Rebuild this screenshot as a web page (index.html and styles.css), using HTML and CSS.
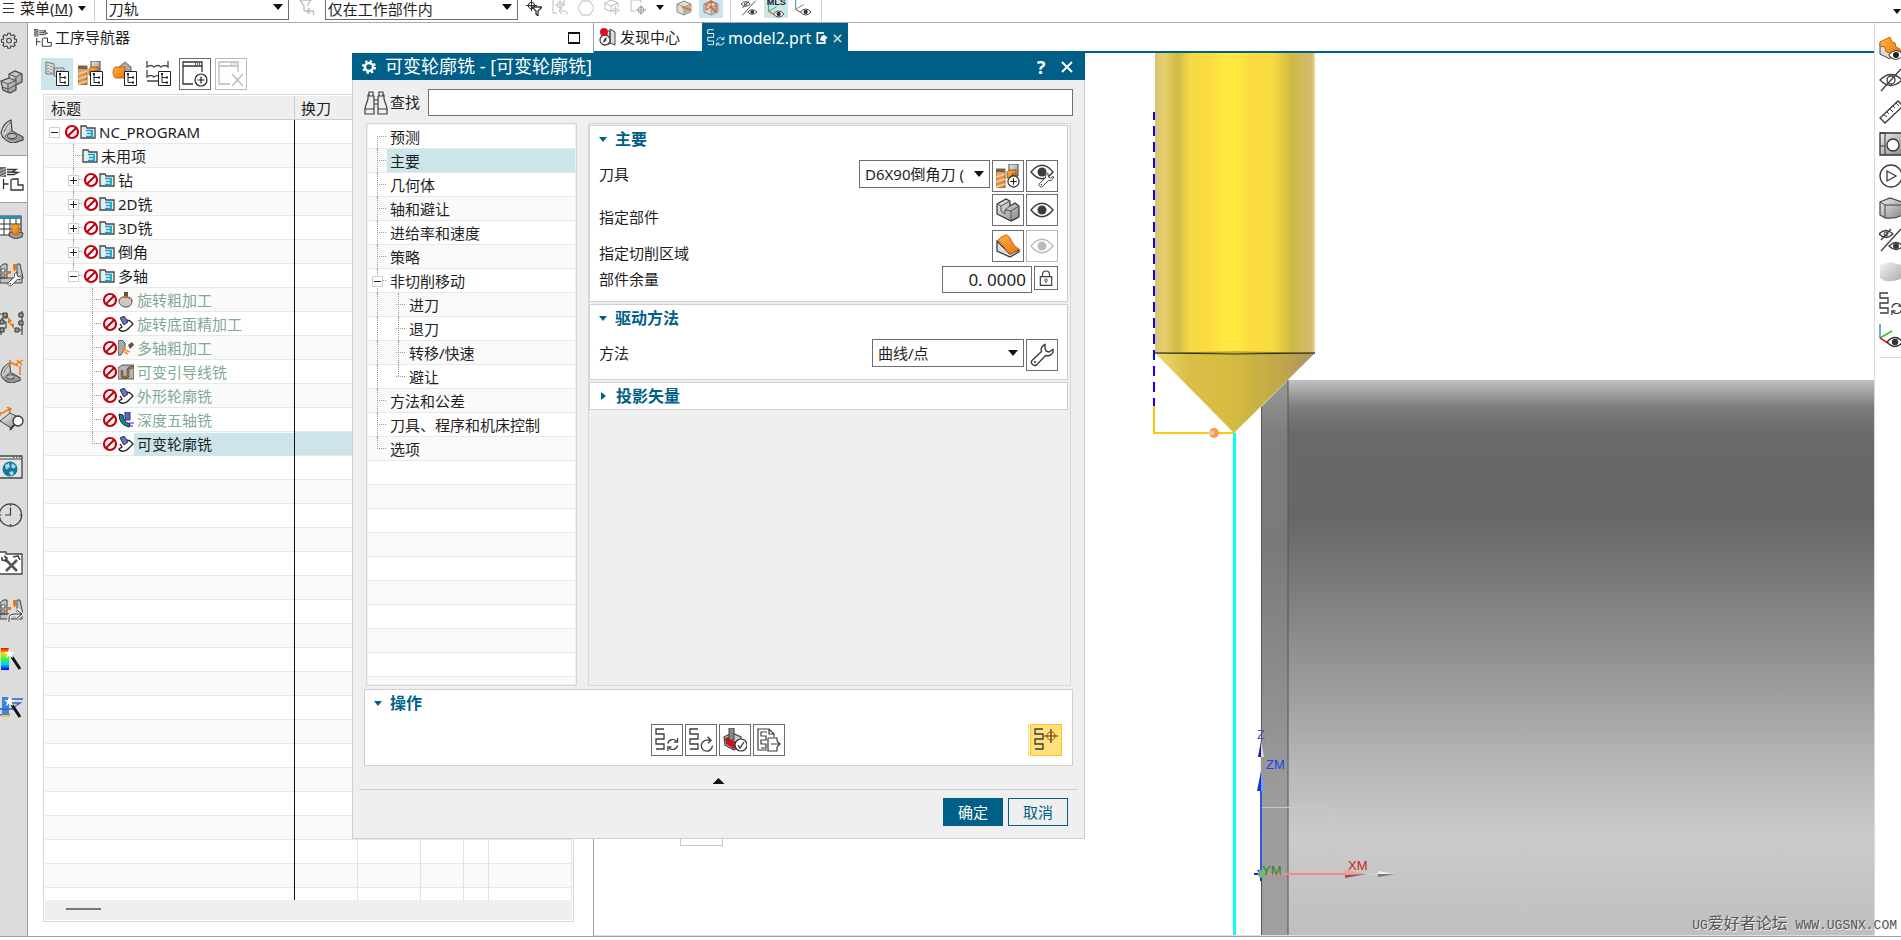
FILE: index.html
```html
<!DOCTYPE html>
<html lang="zh-CN">
<head>
<meta charset="utf-8">
<title>可变轮廓铣</title>
<link rel="stylesheet" href="styles.css">
</head>
<body>
<svg class="defs" aria-hidden="true">
  <defs>
    <linearGradient id="steel" x1="0" y1="0" x2="1" y2="1"><stop offset="0" stop-color="#eee"/><stop offset="1" stop-color="#888"/></linearGradient>
    <linearGradient id="orange" x1="0" y1="0" x2="1" y2="1"><stop offset="0" stop-color="#ffb347"/><stop offset="1" stop-color="#e8720c"/></linearGradient>
    <linearGradient id="rainbow" x1="0" y1="0" x2="0" y2="1"><stop offset="0" stop-color="#f00"/><stop offset=".25" stop-color="#fd0"/><stop offset=".5" stop-color="#2f3"/><stop offset=".75" stop-color="#0cf"/><stop offset="1" stop-color="#00f"/></linearGradient>
  </defs>
  <symbol id="gear" viewBox="0 0 24 24"><path d="M10.400 3h3.200l.5 2.400 1.800.8 2.100-1.400 2.200 2.200-1.400 2.100.8 1.800 2.400.5v3.200l-2.400.5-.8 1.800 1.400 2.100-2.200 2.200-2.100-1.400-1.800.8-.5 2.400h-3.200l-.5-2.400-1.800-.8L6 21.200 3.800 19l1.400-2.100-.8-1.800L2 14.600v-3.200l2.400-.5.8-1.800L3.800 7 6 4.800l2.100 1.400 1.800-.8z" fill="none" stroke="currentColor" stroke-width="1.500"/><circle cx="12" cy="12.800" r="3.200" fill="none" stroke="currentColor" stroke-width="1.500"/></symbol>
  <symbol id="gear-solid" viewBox="0 0 16 16"><circle cx="8" cy="8" r="4" fill="none" stroke="currentColor" stroke-width="2.400"/><circle cx="8" cy="8" r="6" fill="none" stroke="currentColor" stroke-width="2" stroke-dasharray="2.360 2.350"/></symbol>
  <symbol id="blocks" viewBox="0 0 24 24"><path d="M1 11l8-3V4l6-3 7 3v8l-6 3v5l-6 3-7-3z" fill="url(#steel)" stroke="#444" stroke-width="1.200"/><path d="M1 11l7 3 7-3V8M8 14v9M9 4l7 3 6-3M16 7v8M2 17l6 2 8-4M9 8l7 3" fill="none" stroke="#555"/></symbol>
  <symbol id="bracket" viewBox="0 0 24 24"><path d="M1 14C2 8 6 3 11 1l1 11 11 6v3l-9 3C8 24 2 19 1 14z" fill="url(#steel)" stroke="#444" stroke-width="1.200"/><path d="M4 13c2-5 4-8 7-10M5 17l7-5M5 17c3 4 9 5 12 2" fill="none" stroke="#666"/><ellipse cx="12" cy="17" rx="4.500" ry="2.500" fill="#bbb" stroke="#444"/></symbol>
  <symbol id="opnav" viewBox="0 0 24 24"><path d="M0 0h6v10H0z" fill="#666"/><path d="M0 4l6-3M0 7l6-3M0 10l6-3" stroke="#ccc"/><path d="M7 2.500h9l-4 2.500H7M12 5l6 .5-4 2H7M3.500 12v10M3.500 17h5M11 13v10h12v-5h-5v-6h-5z" fill="none" stroke="#333" stroke-width="1.300"/></symbol>
  <symbol id="sheet" viewBox="0 0 24 24"><path d="M-4 1h25v19H-4z" fill="#fff" stroke="#333" stroke-width="1.200"/><path d="M-4 1h25v3H-4z" fill="#2a8fb0"/><path d="M0 9h21M0 14h21M4 4v16M10 4v16M16 4v16" stroke="#333"/><path d="M9 18l5-2 9 2-1 4-7 2-6-3z" fill="#999" stroke="#444"/><path d="M12 10q4-2 7 0v8q-3 3-7 0z" fill="url(#orange)" stroke="#b60"/></symbol>
  <symbol id="machine" viewBox="0 0 24 24"><path d="M0 4l3-3h4v14H0zM17 1h3l3 14h-6zM0 15h22v5H0z" fill="#c4c4c4" stroke="#444"/><path d="M1 6h4v3H1zM1 11h4v2H1z" fill="#fff" stroke="#555"/><path d="M7 8h4v3H7zM13 1h3v5l-1 2h-1l-1-2z" fill="#e87811"/></symbol>
  <symbol id="wrench" viewBox="0 0 24 24"><path d="M15 1.500c-3 1-4.500 4-3.500 7L2 17.500c-2 2.500 1.500 6 4.500 4.500l9-9.500c3 1 6.500-.5 7.500-3.500V6.500L19 9l-3-1-1-3z" fill="#fff" stroke="#3c3c3c" stroke-width="1.400"/><circle cx="5" cy="19" r="1.100" fill="#333"/></symbol>
  <symbol id="nodes" viewBox="0 0 24 24"><path d="M0 3h7v4H2v4h4v6H0M22 0v24M22 4h-4M22 12h-4M22 19h-5M1 21v3" fill="none" stroke="#444" stroke-width="1.200"/><path d="M3 2h4v4H3zM0 9h4v4H0zM0 17h4v4H0zM19 2h4v4h-4zM19 10h4v4h-4zM15 17h4v4h-4z" fill="#999" stroke="#333"/><path d="M8 6l4 4-4 3zM9 12l5 1v5z" fill="#e87811"/></symbol>
  <symbol id="measure" viewBox="0 0 24 24"><path d="M0 14L10 6l12 6-11 9z" fill="url(#steel)" stroke="#444"/><path d="M0 7l10-5M7 0l4 2-2 4M0 5v4" fill="none" stroke="#e87811" stroke-width="1.400"/><circle cx="18" cy="14" r="5" fill="#fff" stroke="#333" stroke-width="1.300"/><path d="M14 18l-4 5" stroke="#333" stroke-width="2"/></symbol>
  <symbol id="globe" viewBox="0 0 24 24"><path d="M-2 1h24v22H-2z" fill="#e5e5e5" stroke="#444" stroke-width="1.300"/><path d="M-2 4h24M13 2.500h1M16 2.500h1M19 2.500h1" stroke="#444"/><circle cx="10" cy="14" r="7.500" fill="#15769c"/><path d="M5 10l4-2 1 4-4 3zM12 8l4 3-2 3-3-2zM9 17l4-1 1 3-3 2z" fill="#9fd8e8"/></symbol>
  <symbol id="clock" viewBox="0 0 24 24"><circle cx="10.500" cy="12" r="11.200" fill="none" stroke="#3c3c3c" stroke-width="1.200"/><path d="M10.500 4.500V12H5M10.500 1v2M10.500 21v2M0 12h1.500M19.500 12h2" fill="none" stroke="#3c3c3c" stroke-width="1.200"/></symbol>
  <symbol id="tools" viewBox="0 0 24 24"><path d="M-2 3V1h8v2h16v20H-2z" fill="#fff" stroke="#444" stroke-width="1.300"/><path d="M5 8l12 12M17 9L6 20" stroke="#555" stroke-width="2.600"/><path d="M2 6v3l4 1 1-3-3-2M13 6l5-1 2 4" fill="none" stroke="#444" stroke-width="1.600"/></symbol>
  <symbol id="wand" viewBox="0 0 24 24"><path d="M12 10l8 12" stroke="#111" stroke-width="3"/><path d="M9 1l1.500 4L15 5l-3.500 2L13 11 9.500 8.500 6 11l1-4-3-2h4z" fill="#fff"/></symbol>
  <symbol id="treebox" viewBox="0 0 13 15"><path d="M.5.5h12v14H.5z" fill="#fff" stroke="#222"/><path d="M4 3v8.500h5M4 6.500h5" fill="none" stroke="#222"/><path d="M3 2h2v2H3zM8 5.500h2v2H8zM8 10.500h2v2H8z" fill="#222"/></symbol>
  <symbol id="no" viewBox="0 0 16 16"><circle cx="8" cy="8" r="6" fill="#fff" stroke="#c5000f" stroke-width="2.200"/><path d="M12 4l-8 8" stroke="#c5000f" stroke-width="2.200"/></symbol>
  <symbol id="folder" viewBox="0 0 16 16"><path d="M1 14V2h5l1 2h8v10z" fill="#e9ecee" stroke="#444" stroke-width="1.300"/><path d="M6 6.500h6v6H6M7 9.500h5" fill="none" stroke="#0aa5cc" stroke-width="1.700"/></symbol>
  <symbol id="rough" viewBox="0 0 16 16"><path d="M1 9c0-3 3-4 7-4s6 1 6 4c0 4-3 6-6 6s-7-2-7-6z" fill="#c8c8c8" stroke="#444"/><path d="M6 0h4v6H6z" fill="#555"/><path d="M3 6q5-3 9 1" fill="none" stroke="#e87811" stroke-width="1.500"/></symbol>
  <symbol id="contour" viewBox="0 0 16 16"><path d="M7 5c3-2 6 0 8 3l-5 5c-3 3-8 3-9 0l3-2-2-3" fill="none" stroke="#222" stroke-width="1.300"/><path d="M2 2l4-2 4 6-4 3z" fill="#6a6fd0" stroke="#334"/></symbol>
  <symbol id="multi" viewBox="0 0 16 16"><path d="M0 1l4-1 3 3v5l-4 7H0z" fill="#aaa" stroke="#555"/><path d="M10 5l4-3 2 3-4 4z" fill="#555"/><path d="M4 8q1 4 6 6M6 7q1 4 6 5" fill="none" stroke="#f08a2a" stroke-width="1.500"/></symbol>
  <symbol id="guide" viewBox="0 0 16 16"><path d="M0 4l4-3h12v14H0z" fill="#b5b5b5" stroke="#555"/><path d="M4 6v6q3 3 6 0V6q1-3 6-3" fill="none" stroke="#444" stroke-width="2.500"/><path d="M4 6v6q3 3 6 0V6q1-3 6-3" fill="none" stroke="#e08030"/></symbol>
  <symbol id="five" viewBox="0 0 16 16"><path d="M1 2l4 1q0 7 7 9l-1 3Q1 13 1 2z" fill="#1d8a7c" stroke="#123"/><path d="M7 0h5v8H7z" fill="#5b62d6" stroke="#336"/><path d="M11 11h5M11 14h4" stroke="#22d"/></symbol>
  <symbol id="eye" viewBox="0 0 24 24"><path d="M1 12Q12-1.500 23 12 12 25.500 1 12z" fill="#fff" stroke="currentColor" stroke-width="1.400"/><circle cx="12" cy="12" r="4.500" fill="currentColor"/></symbol>
  <symbol id="eye-off" viewBox="0 0 24 24"><path d="M1 12Q12 1 23 12 12 23 1 12z" fill="none" stroke="#3c3c3c" stroke-width="1.300"/><circle cx="12" cy="12" r="4" fill="none" stroke="#3c3c3c" stroke-width="1.300"/><path d="M22 1L2 23" stroke="#3c3c3c" stroke-width="1.300"/></symbol>
  <symbol id="eyes" viewBox="0 0 24 24"><path d="M0 6q7-7 14 0-7 7-14 0zM2 23L22 1M12 1L2 12M10 18q7-7 14 0-7 7-14 0z" fill="none" stroke="#3c3c3c" stroke-width="1.300"/><circle cx="7" cy="6" r="2" fill="none" stroke="#3c3c3c"/><circle cx="17" cy="18" r="3" fill="#3c3c3c"/></symbol>
  <symbol id="axis-eye" viewBox="0 0 24 24"><path d="M1 0v14" stroke="#2a98b8" stroke-width="1.500"/><path d="M1 14l12-7" stroke="#3cb83c" stroke-width="1.500"/><path d="M1 14l8 5" stroke="#e22" stroke-width="1.500"/><path d="M8 18q8-9 16 0-8 9-16 0z" fill="#fff" stroke="#333" stroke-width="1.300"/><circle cx="16" cy="18" r="3.200" fill="#333"/></symbol>
  <symbol id="snake" viewBox="0 0 10 22"><path d="M9 1H1v5h8v5H1M9 11M1 11v0M1 11h8v5M9 11v5H1v5h8" fill="none"/><path d="M9 1H1v5h8v5H1v5h8v5H1" fill="none" stroke="currentColor" stroke-width="1.300"/></symbol>
  <symbol id="refresh" viewBox="0 0 14 14"><path d="M2 6a5.500 5.500 0 0 1 9.500-2.500M12.500 0v4.500H8.500M12.500 8A5.500 5.500 0 0 1 3 10.500M2 14V9.500h4" fill="none" stroke="currentColor" stroke-width="1.300"/></symbol>
  <symbol id="generate" viewBox="0 0 24 24"><use href="#snake" x="0" y="0" width="10" height="22"/><use href="#refresh" x="11" y="10" width="13" height="13"/></symbol>
  <symbol id="replay" viewBox="0 0 24 24"><use href="#snake" x="0" y="0" width="10" height="22"/><path d="M23.300 17.500A5.500 5.500 0 1 1 18 12.200h4M18.500 8.700L22 12.200l-3 3" fill="none" stroke="currentColor" stroke-width="1.300"/></symbol>
  <symbol id="verify" viewBox="0 0 24 24"><path d="M1 9l8-4 9 4v8l-7 5-9-5z" fill="#c9c9c9" stroke="#444" stroke-width="1.200"/><path d="M2 10l6-2v4l7 2-4 7-8-5z" fill="#c4161c"/><path d="M6 0h5v12H6z" fill="#888" stroke="#444"/><circle cx="18" cy="17" r="6" fill="#fff" stroke="#333" stroke-width="1.200"/><path d="M15 17l2 3 4-6" fill="none" stroke="#333" stroke-width="1.300"/></symbol>
  <symbol id="output" viewBox="0 0 24 24"><path d="M10 22H1V1h11l5 5v3M12 1v5h5M10 4H4v4h5v4H4v4h5v4H4M11 10v13h9v-4M11 10h9v3M14 16h9M20 13l3 3-3 3" fill="none" stroke="#3c3c3c" stroke-width="1.200"/></symbol>
  <symbol id="edit-path" viewBox="0 0 24 24"><use href="#snake" x="0" y="0" width="10" height="22"/><circle cx="17" cy="8" r="4" fill="none" stroke="#e87811" stroke-width="1.500"/><path d="M10 8h14M17 1v14" stroke="#3c3c3c" stroke-width="1.200"/></symbol>
  <symbol id="cutter" viewBox="0 0 24 24"><path d="M13 0h9v12h-9z" fill="url(#steel)" stroke="#444"/><path d="M0 5h9v19H0z" fill="url(#orange)" stroke="#a50"/><path d="M0 5h9v3H0z" fill="#666"/><path d="M0 13l9-3M0 18l9-3M0 23l9-3" stroke="#ccc" stroke-width="2"/><path d="M11 14V9q0-3 5-3h4v4h-4v5z" fill="url(#orange)" stroke="#a50"/></symbol>
  <symbol id="plus-badge" viewBox="0 0 14 14"><circle cx="7" cy="7" r="6" fill="#fff" stroke="#222" stroke-width="1.200"/><path d="M3.500 7h7M7 3.500v7" stroke="#222" stroke-width="1.200"/></symbol>
  <symbol id="part" viewBox="0 0 24 24"><path d="M1 6l9-5 4 2v5l5-3 4 3v11l-8 4L1 16z" fill="url(#steel)" stroke="#333" stroke-width="1.200"/><path d="M1 6l4 2 9-5M5 8v5l4 3v-4l5-4M9 12l6 1 8-5M15 13v10" fill="none" stroke="#555"/></symbol>
  <symbol id="area" viewBox="0 0 24 24"><path d="M1 7v10l13 6 9-5v-2L14 20z" fill="#ddd" stroke="#333" stroke-width="1.200"/><path d="M1 7q4-5 9-6c5 0 5 10 13 14l-8 5C8 17 7 7 1 7z" fill="url(#orange)" stroke="#d25c00"/></symbol>
  <symbol id="lock" viewBox="0 0 16 18"><path d="M1.500 7.500h13v10h-13zM4 7.500V5q0-4 4-4t4 4v2.500" fill="none" stroke="#3c3c3c" stroke-width="1.300"/><circle cx="8" cy="11.500" r="1.500" fill="none" stroke="#3c3c3c"/><path d="M8 13v2" stroke="#3c3c3c"/></symbol>
  <symbol id="binoculars" viewBox="0 0 24 24"><path d="M5 1h4v3l1 2v17H1v-6L4 8V4h1zM15 1h4v3h1v4l3 9v6h-9V6l1-2zM10 9h4M10 13h4M1 18h9M14 18h9M4 5h5M15 5h5" fill="none" stroke="#3c3c3c" stroke-width="1.200"/></symbol>
  <symbol id="cube" viewBox="0 0 16 16"><path d="M1 4l7-3 7 3v8l-7 3-7-3z" fill="#ddd" stroke="#888"/><path d="M8 7v8l7-3V4z" fill="#b5b5b5"/><path d="M1 4l7 3 7-3M8 7v8" fill="none" stroke="#999"/></symbol>
  <symbol id="crosshair" viewBox="0 0 12 12"><circle cx="6" cy="6" r="3.500" fill="none" stroke="currentColor"/><path d="M0 6h12M6 0v12" stroke="currentColor"/></symbol>
</svg>

<header class="toolbar">
  <button class="menu-btn"><span class="burger"></span>菜单(<u>M</u>)<span class="caret"></span></button>
  <i class="sep"></i>
  <label class="combo combo-path"><select aria-label="类型过滤器"><option>刀轨</option></select></label>
  <svg class="ic16 faded filter-ic" viewBox="0 0 16 16"><path d="M8 12l-3-2V6L1 0h11L8 6M9 11h4q3 0 1 4M11 8l-3 3 3 3" fill="none" stroke="currentColor" stroke-width="1.300"/></svg>
  <label class="combo combo-scope"><select aria-label="选择范围"><option>仅在工作部件内</option></select></label>
  <div class="tools">
    <svg class="ic16" viewBox="0 0 16 16"><use href="#crosshair" width="11" height="11"/><path d="M6 7h10l-4 4v5l-2-2v-3z" fill="#fff" stroke="#333" stroke-width="1.300"/></svg>
    <svg class="ic16 faded" viewBox="0 0 16 16"><path d="M1 0v13h4M12 0v5" fill="none" stroke="currentColor"/><use href="#crosshair" x="3" y="0" width="10" height="10"/><path d="M8 11h5q3 0 2 4M10 8l-3 3 3 3" fill="none" stroke="currentColor"/></svg>
    <svg class="ic16 faded" viewBox="0 0 16 16"><path d="M4 1h8l4 7-4 7H4L0 8z" fill="none" stroke="currentColor"/></svg>
    <svg class="ic16 faded" viewBox="0 0 16 16"><path d="M8 12l-7-3V3l6-3 7 3v4M1 3l6 3 7-3M7 6v5" fill="none" stroke="currentColor"/><use href="#crosshair" x="7" y="6" width="9" height="9"/></svg>
    <svg class="ic16 faded" viewBox="0 0 16 16"><path d="M1 0v11h4M2 0h9v3" fill="none" stroke="currentColor"/><use href="#crosshair" x="6" y="5" width="10" height="10" color="#888"/></svg>
    <span class="caret"></span>
    <svg class="ic16" viewBox="0 0 16 16"><use href="#cube"/><path d="M6 7l9 3" stroke="#e87811" stroke-width="2"/></svg>
    <span class="on"><svg class="ic16" viewBox="0 0 16 16"><use href="#cube"/><path d="M8 1v6l-5 3V5zM8 7l5 5V4L8 1" fill="none" stroke="#d8632a" stroke-width="1.200"/></svg></span>
    <i class="sep"></i>
    <svg class="ic16"><use href="#eyes"/></svg>
    <span class="on mls"><b>MLS</b><svg class="ic16"><use href="#axis-eye"/></svg></span>
    <svg class="ic16"><use href="#axis-eye"/></svg>
    <i class="sep"></i>
  </div>
  <span class="caret end"></span>
</header>

<div class="workspace">
  <nav class="sidebar" aria-label="资源条">
    <button class="first" aria-label="设置"><svg class="ic18"><use href="#gear"/></svg></button>
    <button class="tall" aria-label="装配"><svg><use href="#blocks"/></svg></button>
    <button class="tall" aria-label="部件"><svg><use href="#bracket"/></svg></button>
    <button class="active" aria-label="工序导航器"><svg><use href="#opnav"/></svg></button>
    <button aria-label="加工特征"><svg><use href="#sheet"/></svg></button>
    <button aria-label="机床导航"><svg viewBox="0 0 24 24"><use href="#machine"/><use href="#wrench" x="7" y="8" width="16" height="16"/></svg></button>
    <button aria-label="节点"><svg><use href="#nodes"/></svg></button>
    <button aria-label="标注"><svg viewBox="0 0 24 24"><use href="#bracket" y="3" width="21" height="21"/><path d="M10 3l8 4M10 1v5M16 5l7-4M17 1l5 5M20 7v9" stroke="#e87811" stroke-width="1.400"/></svg></button>
    <button aria-label="测量"><svg><use href="#measure"/></svg></button>
    <button aria-label="网页"><svg><use href="#globe"/></svg></button>
    <button aria-label="历史"><svg><use href="#clock"/></svg></button>
    <button aria-label="工具"><svg><use href="#tools"/></svg></button>
    <button aria-label="机床"><svg viewBox="0 0 24 24"><use href="#machine"/><path d="M9 23v-4q0-4 5-4h7M17 10l5 5-5 4" fill="none" stroke="#fff" stroke-width="3"/><path d="M9 23v-4q0-4 5-4h8M17 11l5 4-5 4" fill="none" stroke="#222"/></svg></button>
    <button aria-label="颜色"><svg viewBox="0 0 24 24"><path d="M1 1h8v22H1z" fill="url(#rainbow)"/><use href="#wand"/></svg></button>
    <button aria-label="向导"><svg viewBox="0 0 24 24"><path d="M2 2h7v17H2z" fill="#3a86d8"/><path d="M0 20h10M12 4h11M11 8h9l-6 4M0 14h13" stroke="#2f62c8" stroke-width="1.500" fill="none"/><path d="M1 21h9" stroke="#f4c430" stroke-width="2"/><use href="#wand"/></svg></button>
  </nav>

  <section class="navigator">
    <h1 class="panel-title"><svg class="ic18"><use href="#opnav"/></svg><span>工序导航器</span><button class="maximise" aria-label="最大化"></button></h1>
    <div class="nav-tools">
      <button class="on" aria-label="程序顺序视图"><svg viewBox="0 0 26 26"><path d="M2 1l8 2v10H2zM10 7h10v8H10z" fill="#d8d8d8" stroke="#777"/><path d="M4 4v8M7 5v8M13 9v5M17 9v3" stroke="#555" stroke-dasharray="1 2"/><use href="#treebox" x="12" y="10" width="13" height="15"/></svg></button>
      <button aria-label="机床视图"><svg viewBox="0 0 26 26"><use href="#cutter" width="24" height="24"/><use href="#treebox" x="12" y="10" width="13" height="15"/></svg></button>
      <button aria-label="几何视图"><svg viewBox="0 0 26 26"><path d="M7 6l6-5 6 5v12l-6-1z" fill="#aaa" stroke="#666"/><path d="M3 6h10v11H3q-4-5 0-11z" fill="url(#orange)" stroke="#c60"/><use href="#treebox" x="12" y="10" width="13" height="15"/></svg></button>
      <button aria-label="加工方法视图"><svg viewBox="0 0 26 26"><path d="M1 0v6q4-3 7 0 4-3 7 0 4-3 7 0V0M1 9v7q4-3 7 0 2-2 4-1M1 20h11" fill="none" stroke="#444" stroke-width="1.300"/><use href="#treebox" x="12" y="10" width="13" height="15"/></svg></button>
      <button class="boxed" aria-label="创建"><svg viewBox="0 0 26 26"><path d="M11 23H1V1h19v10M1 5h19M13 3h1M15 3h1M17 3h1" fill="none" stroke="#333" stroke-width="1.300"/><use href="#plus-badge" x="12" y="12" width="14" height="14"/></svg></button>
      <button class="boxed off" aria-label="删除" disabled><svg viewBox="0 0 26 26"><path d="M12 23H1V1h19v10M1 5h19M13 3h1M15 3h1M17 3h1M14 13l11 12M25 13L14 25" fill="none" stroke="#bbb" stroke-width="1.300"/></svg></button>
    </div>
    <div class="grid">
      <table class="ops">
        <colgroup><col class="c1"><col class="c2"><col class="c3"><col class="c4"><col class="c5"><col></colgroup>
        <thead><tr><th>标题</th><th>换刀</th><th></th><th></th><th></th><th></th></tr></thead>
        <tbody>
          <tr><td><div class="node l0"><i class="box minus"></i><svg><use href="#no"/></svg><svg><use href="#folder"/></svg><span>NC_PROGRAM</span></div></td><td colspan="5"></td></tr>
          <tr><td><div class="node l1 line"><svg><use href="#folder"/></svg><span>未用项</span></div></td><td colspan="5"></td></tr>
          <tr><td><div class="node l1 group line"><i class="box plus"></i><svg><use href="#no"/></svg><svg><use href="#folder"/></svg><span>钻</span></div></td><td colspan="5"></td></tr>
          <tr><td><div class="node l1 group line"><i class="box plus"></i><svg><use href="#no"/></svg><svg><use href="#folder"/></svg><span>2D铣</span></div></td><td colspan="5"></td></tr>
          <tr><td><div class="node l1 group line"><i class="box plus"></i><svg><use href="#no"/></svg><svg><use href="#folder"/></svg><span>3D铣</span></div></td><td colspan="5"></td></tr>
          <tr><td><div class="node l1 group line"><i class="box plus"></i><svg><use href="#no"/></svg><svg><use href="#folder"/></svg><span>倒角</span></div></td><td colspan="5"></td></tr>
          <tr><td><div class="node l1 group line end"><i class="box minus"></i><svg><use href="#no"/></svg><svg><use href="#folder"/></svg><span>多轴</span></div></td><td colspan="5"></td></tr>
          <tr><td><div class="node l2 line"><svg><use href="#no"/></svg><svg><use href="#rough"/></svg><span>旋转粗加工</span></div></td><td colspan="5"></td></tr>
          <tr><td><div class="node l2 line"><svg><use href="#no"/></svg><svg><use href="#contour"/></svg><span>旋转底面精加工</span></div></td><td colspan="5"></td></tr>
          <tr><td><div class="node l2 line"><svg><use href="#no"/></svg><svg><use href="#multi"/></svg><span>多轴粗加工</span></div></td><td colspan="5"></td></tr>
          <tr><td><div class="node l2 line"><svg><use href="#no"/></svg><svg><use href="#guide"/></svg><span>可变引导线铣</span></div></td><td colspan="5"></td></tr>
          <tr><td><div class="node l2 line"><svg><use href="#no"/></svg><svg><use href="#contour"/></svg><span>外形轮廓铣</span></div></td><td colspan="5"></td></tr>
          <tr><td><div class="node l2 line"><svg><use href="#no"/></svg><svg><use href="#five"/></svg><span>深度五轴铣</span></div></td><td colspan="5"></td></tr>
          <tr class="selected"><td><div class="node l2 line end"><svg><use href="#no"/></svg><svg><use href="#contour"/></svg><span>可变轮廓铣</span></div></td><td colspan="5"></td></tr>
          <tr class="rest"><td></td><td></td><td></td><td></td><td></td><td></td></tr>
        </tbody>
      </table>
      <div class="scrollbar"><i></i></div>
    </div>
  </section>

  <main class="viewer">
    <div class="tabs">
      <button class="tab"><svg class="ic18" viewBox="0 0 18 18"><path d="M3 3h8v13H3zM11 1l5 3v13l-5-2z" fill="#ddd" stroke="#444"/><circle cx="6" cy="12" r="5" fill="#fff" stroke="#444" stroke-width="1.300"/><path d="M8 9l-1 4-3 2 1-4z" fill="#444"/><circle cx="5" cy="4" r="4" fill="#d8102c"/></svg>发现中心</button>
      <button class="tab current"><svg class="ic18"><use href="#generate"/></svg><span>model2.prt</span><svg class="mod" viewBox="0 0 12 14"><path d="M8 1H1v11h8V9" fill="none" stroke="#fff" stroke-width="1.800"/><path d="M4 9l1-4 3-2 4 3-4 4z" fill="#fff"/></svg><svg class="close" viewBox="0 0 10 10"><path d="M1 1l8 8M9 1L1 9" stroke="#c4ced2" stroke-width="2"/></svg></button>
    </div>
    <div class="scene">
      <svg class="model" role="img" aria-label="刀具与工件">
        <defs>
          <linearGradient id="shank"><stop offset="0" stop-color="#d9c37a"/><stop offset=".06" stop-color="#e6cf69"/><stop offset=".14" stop-color="#d0b947"/><stop offset=".22" stop-color="#f6d944"/><stop offset=".34" stop-color="#fcdc41"/><stop offset=".43" stop-color="#ffe840"/><stop offset=".52" stop-color="#ffe840"/><stop offset=".6" stop-color="#fcdb41"/><stop offset=".73" stop-color="#fadb42"/><stop offset=".86" stop-color="#ceb945"/><stop offset=".98" stop-color="#d2bb72"/><stop offset="1" stop-color="#f0dfa0"/></linearGradient>
          <linearGradient id="cone"><stop offset="0" stop-color="#eedb74"/><stop offset=".2" stop-color="#d9bf4a"/><stop offset=".45" stop-color="#d8bc41"/><stop offset=".6" stop-color="#ccb343"/><stop offset=".8" stop-color="#bfa64a"/><stop offset="1" stop-color="#a8936a"/></linearGradient>
          <linearGradient id="bar" x1="0" y1="0" x2="0" y2="1"><stop offset="0" stop-color="#c1c1c1"/><stop offset=".02" stop-color="#a6a6a6"/><stop offset=".05" stop-color="#7b7b7b"/><stop offset=".1" stop-color="#696969"/><stop offset=".25" stop-color="#676767"/><stop offset=".54" stop-color="#999"/><stop offset=".7" stop-color="#b8b8b8"/><stop offset=".82" stop-color="#cbcbcb"/><stop offset="1" stop-color="#bfbfbf"/></linearGradient>
          <linearGradient id="chamfer" x1="0" y1="0" x2="0" y2="1"><stop offset="0" stop-color="#999"/><stop offset=".1" stop-color="#7d7d7d"/><stop offset=".3" stop-color="#7a7a7a"/><stop offset=".75" stop-color="#9c9c9c"/><stop offset="1" stop-color="#a0a0a0"/></linearGradient>
        </defs>
        <g transform="translate(-594 -53)">
          <rect x="1288" y="380" width="100%" height="555" fill="url(#bar)"/>
          <path d="M1261 407l27-27v555h-27z" fill="url(#chamfer)"/>
          <path d="M1261.500 407v528M1288 380v555" stroke="#555"/>
          <rect x="1155" y="53" width="160" height="300" fill="url(#shank)"/>
          <path d="M1155 353h160l-81 80z" fill="url(#cone)"/>
          <path d="M1155 353q80-2 160 0" fill="none" stroke="#8a7a30"/><path d="M1155 353q80 2 160 0" fill="none" stroke="#302a10"/>
          <path d="M1154 112v294" stroke="#1200f0" stroke-width="2" stroke-dasharray="10 6" stroke-dashoffset="2"/>
          <path d="M1154 406v27h80" fill="none" stroke="#ffc60a" stroke-width="2"/>
          <circle cx="1214" cy="433" r="5" fill="#ff9c3a"/><path d="M1209 431h5v4h-5z" fill="#ccc"/>
          <path d="M1234.500 433v502" stroke="#0ff" stroke-width="3"/>
          <path d="M1262 807.500h66.500v64" fill="none" stroke="#c8c8c8"/>
          <path d="M1261 741l3 16h-3z" fill="#ddd"/><path d="M1261 741l-3 16h3z" fill="#1a1aa8"/><path d="M1261 757v16" stroke="#ddd"/>
          <path d="M1261 874V785" stroke="#3556e0" stroke-width="2"/><path d="M1261 771l4 20h-4z" fill="#7c9cf4"/><path d="M1261 771l-4 20h4z" fill="#1236c8"/>
          <path d="M1263 874h84" stroke="#f08a8a" stroke-width="2"/><path d="M1345 870l21 4-21 1z" fill="#f2a2a2"/><path d="M1345 875l21-1-21 4z" fill="#8c5555"/>
          <path d="M1378 871l17 3h-17z" fill="#eee"/><path d="M1378 874h17l-17 3z" fill="#777"/><path d="M1367 874h11" stroke="#d5d5d5"/>
          <path d="M1254 874h6M1258 870l3 4M1261 877v4" stroke="#2222d8" stroke-width="2"/><circle cx="1262" cy="874" r="4" fill="#72b878"/>
          <g class="axis"><text x="1257" y="739" fill="#5555b8">Z</text><text x="1266" y="769" fill="#2440f0">ZM</text><text x="1348" y="870" fill="#cc2222">XM</text><text x="1262" y="875" fill="#228c22">YM</text></g>
        </g>
      </svg>
    </div>
  </main>

  <aside class="rightbar" aria-label="视图工具">
    <button aria-label="显示"><svg viewBox="0 0 24 24"><path d="M1 7v11l10 5V13z" fill="#ddd" stroke="#444"/><path d="M1 6l10-5 2 5 3 1 1 4 4 2 1 6-9 4-2-6-4-1-1-5-5-1z" fill="url(#orange)" stroke="#c60"/><use href="#eye" x="9" y="11" width="16" height="16" color="#222"/></svg></button>
    <button aria-label="隐藏"><svg><use href="#eye-off"/></svg></button>
    <button aria-label="尺子"><svg viewBox="0 0 24 24"><path d="M1 18L19 1l5 5L6 23z" fill="#fff" stroke="#3c3c3c" stroke-width="1.300"/><path d="M5 15l3 2M8 12l2 2M11 9l3 3M14 6l2 2M17 3l3 3" stroke="#3c3c3c"/></svg></button>
    <button aria-label="截面"><svg viewBox="0 0 24 24"><path d="M1 1h24v22H1z" fill="url(#steel)" stroke="#333" stroke-width="1.300"/><path d="M1 1h5v22M1 14h5" fill="none" stroke="#333"/><circle cx="14" cy="13" r="6" fill="#fff" stroke="#333" stroke-width="1.300"/></svg></button>
    <button aria-label="播放"><svg viewBox="0 0 24 24"><circle cx="12" cy="12" r="11" fill="none" stroke="#3c3c3c" stroke-width="1.300"/><path d="M8 7l9 5-9 5z" fill="none" stroke="#3c3c3c" stroke-width="1.300"/></svg></button>
    <button aria-label="着色"><svg viewBox="0 0 24 24"><path d="M1 6l10-4 12 4v13q-6 4-17 3l-5-3z" fill="url(#steel)" stroke="#444" stroke-width="1.200"/><path d="M1 6l5 3h17M6 9v13" fill="none" stroke="#444"/></svg></button>
    <button aria-label="显示隐藏"><svg><use href="#eyes"/></svg></button>
    <button aria-label="实体"><svg viewBox="0 0 24 24"><path d="M1 5l10-3 12 3v13q-6 4-17 3l-5-3z" fill="url(#steel)" opacity=".7"/></svg></button>
    <button aria-label="生成"><svg class="dark"><use href="#generate"/></svg></button>
    <button aria-label="坐标系"><svg><use href="#axis-eye"/></svg></button>
  </aside>
</div>
<div class="popup-edge"></div>

<section class="dialog" role="dialog" aria-labelledby="dlg-title">
  <header class="dlg-head"><svg class="ic16"><use href="#gear-solid"/></svg><h2 id="dlg-title">可变轮廓铣 - [可变轮廓铣]</h2><button aria-label="帮助">?</button><button aria-label="关闭"><svg viewBox="0 0 12 12"><path d="M1 1l10 10M11 1L1 11" stroke="#fff" stroke-width="2"/></svg></button></header>
  <div class="find"><svg><use href="#binoculars"/></svg><label for="find">查找</label><input id="find" type="text"></div>
  <div class="dlg-body">
    <ul class="pages">
      <li class="p line start"><span>预测</span></li>
      <li class="p line selected"><span>主要</span></li>
      <li class="p line"><span>几何体</span></li>
      <li class="p line"><span>轴和避让</span></li>
      <li class="p line"><span>进给率和速度</span></li>
      <li class="p line"><span>策略</span></li>
      <li class="p line"><i class="box minus"></i><span>非切削移动</span></li>
      <li class="p line sub"><span>进刀</span></li>
      <li class="p line sub"><span>退刀</span></li>
      <li class="p line sub"><span>转移/快速</span></li>
      <li class="p line sub last"><span>避让</span></li>
      <li class="p line"><span>方法和公差</span></li>
      <li class="p line"><span>刀具、程序和机床控制</span></li>
      <li class="p line end"><span>选项</span></li>
    </ul>
    <div class="settings">
      <section class="card">
        <h3><i class="tri"></i>主要</h3>
        <div class="field"><label for="tool">刀具</label><span class="combo w-tool"><select id="tool"><option>D6X90倒角刀 (</option></select></span><button class="sq" aria-label="新建刀具"><svg viewBox="0 0 24 24"><use href="#cutter"/><use href="#plus-badge" x="11" y="11" width="13" height="13"/></svg></button><button class="sq" aria-label="编辑刀具"><svg viewBox="0 0 24 24"><use href="#eye" y="-4" width="24" height="24"/><use href="#wrench" x="8" y="8" width="16" height="16"/></svg></button></div>
        <div class="field low"><span class="lbl">指定部件</span><button class="sq" aria-label="选择部件"><svg><use href="#part"/></svg></button><button class="sq" aria-label="显示部件"><svg><use href="#eye"/></svg></button></div>
        <div class="field low gap"><span class="lbl">指定切削区域</span><button class="sq" aria-label="选择切削区域"><svg><use href="#area"/></svg></button><button class="sq off" aria-label="显示切削区域" disabled><svg><use href="#eye"/></svg></button></div>
        <div class="field num gap"><label for="stock">部件余量</label><input id="stock" type="text" value="0. 0000"><button class="sq small" aria-label="锁定"><svg><use href="#lock"/></svg></button></div>
      </section>
      <section class="card">
        <h3><i class="tri"></i>驱动方法</h3>
        <div class="field"><label for="method">方法</label><span class="combo w-method"><select id="method"><option>曲线/点</option></select></span><button class="sq" aria-label="编辑"><svg><use href="#wrench"/></svg></button></div>
      </section>
      <section class="card closed"><h3><i class="tri right"></i>投影矢量</h3></section>
    </div>
  </div>
  <section class="actions">
    <h3><i class="tri"></i>操作</h3>
    <div class="row"><div class="center"><button class="sq" aria-label="生成"><svg><use href="#generate"/></svg></button><button class="sq" aria-label="重播"><svg><use href="#replay"/></svg></button><button class="sq" aria-label="确认"><svg><use href="#verify"/></svg></button><button class="sq" aria-label="列表"><svg><use href="#output"/></svg></button></div><button class="sq hot" aria-label="编辑刀轨"><svg><use href="#edit-path"/></svg></button></div>
  </section>
  <button class="collapse" aria-label="折叠"></button>
  <footer class="dlg-foot"><button class="ok">确定</button><button>取消</button></footer>
</section>
<p class="watermark">UG<span>爱好者论坛</span> WWW.UGSNX.COM</p>
</body>
</html>
```

FILE: styles.css
```css
* { box-sizing: border-box; }
body {
  margin: 0; height: 100vh; display: flex; flex-direction: column; overflow: hidden; position: relative;
  background: #fff; color: #1e1e1e; padding-bottom: 3px;
  font: 15px/20px "Noto Sans", "Noto Sans CJK SC", sans-serif;
}
button, input, select { font: inherit; color: inherit; margin: 0; border-radius: 0; }
button { background: none; border: 0; padding: 0; display: flex; align-items: center; justify-content: center; }
h1, h2, h3, p, ul { margin: 0; padding: 0; font-weight: normal; }
svg { display: block; flex: none; width: 24px; height: 24px; }
svg.defs { position: absolute; width: 0; height: 0; }
svg.ic16 { width: 16px; height: 16px; }
svg.ic18 { width: 18px; height: 18px; }
.faded { color: #bbb; }
.on { background: #cce5ea; }
.caret { width: 0; height: 0; border: 4px solid transparent; border-top: 5px solid #111; border-bottom: 0; }

.toolbar { flex: none; height: 23px; border-bottom: 1px solid #a8a8a8; display: flex; align-items: flex-start; padding-left: 3px; }
.menu-btn { height: 16px; margin-right: 8px; line-height: 16px; }
.burger { width: 11px; height: 10px; margin-right: 6px; border-top: 1px solid #333; border-bottom: 1px solid #333; background: linear-gradient(#333, #333) 0 4px / 11px 1px no-repeat; }
.menu-btn .caret { margin-left: 5px; }
.sep { width: 1px; height: 21px; background: #ccc; }
.toolbar > .sep { margin-right: 11px; }
.combo { position: relative; display: block; flex: none; height: 28px; border: 1px solid #6e6e6e; background: #fff; }
.combo::after { content: ""; position: absolute; right: 5px; top: 10px; border: 5px solid transparent; border-top: 6px solid #111; border-bottom: 0; pointer-events: none; }
.combo select { appearance: none; width: 100%; height: 100%; border: 0; background: none; padding: 0 0 0 5px; outline: 0; }
.toolbar .combo { height: 20px; border-top: 0; }
.toolbar .combo select { padding: 0 0 2px 2px; line-height: 16px; display: block; }
.toolbar .combo::after { top: 4px; }
.combo-path { width: 183px; margin-right: 10px; }
.combo-scope { width: 193px; }
.filter-ic { margin-right: 10px; }
.tools { display: flex; gap: 10px; margin-left: 8px; }
.tools .caret { margin: 5px 2px 0 0; }
.tools .on { height: 18px; width: 24px; padding-left: 4px; margin: 0 -3px; }
.tools .mls { position: relative; padding-top: 2px; }
.mls b { position: absolute; left: 3px; top: -4px; font: bold 9px/12px "Liberation Sans", sans-serif; z-index: 1; }
.toolbar .end { margin: 9px 0 0 auto; flex: none; }

.workspace { flex: 1; display: flex; min-height: 0; border-bottom: 1px solid #a0a0a0; }
.sidebar { width: 28px; flex: none; background: #dcdcdc; border-right: 1px solid #a0a0a0; color: #444; overflow: hidden; }
.sidebar button { width: 28px; height: 48px; justify-content: flex-start; padding-right: 4px; }
.sidebar .first { height: 34px; }
.sidebar .tall { height: 49px; }
.sidebar .active { background: #fff; border-top: 1px solid #a0a0a0; border-bottom: 1px solid #a0a0a0; }

.navigator { width: 566px; flex: none; border-right: 1px solid #a0a0a0; display: flex; flex-direction: column; padding: 0 19px 14px 15px; }
.panel-title { display: flex; align-items: center; height: 30px; font-size: 15px; margin: 0 -10px; }
.panel-title span { padding-bottom: 2px; }
.panel-title svg { margin-right: 3px; margin-left: 1px; }
.maximise { width: 12px; height: 12px; border: 2px solid #111; border-width: 2px 1px; margin-left: auto; margin-right: 4px; }
.nav-tools { display: flex; gap: 2px; padding: 5px 0 4px; margin-left: -2px; }
.nav-tools button { width: 32px; height: 32px; }
.nav-tools svg { width: 26px; height: 26px; }
.boxed { border: 1px solid #6e6e6e; }
.nav-tools .boxed { margin-left: 2px; }
.nav-tools .off { border-color: #bbb; }
.grid { flex: 1; display: flex; flex-direction: column; border: 1px solid #d8d8d8; padding: 1px; min-height: 0; }
.ops { flex: 1; width: 100%; height: 100%; table-layout: fixed; border-spacing: 0; background: repeating-linear-gradient(#fff 0 23px, #e8e8e8 23px 24px, #fafafa 24px 47px, #e8e8e8 47px 48px) 0 24px; }
.c1 { width: 250px; } .c2 { width: 63px; } .c3 { width: 63px; } .c4 { width: 43px; } .c5 { width: 25px; }
.ops th { height: 24px; padding: 0 0 0 6px; text-align: left; font-weight: normal; background: #efefef; border-bottom: 1px solid #ccc; border-right: 1px solid #ccc; }
.ops td { height: 24px; padding: 0; border: 0; }
.ops td:first-child { border-right: 1px solid #111; }
.ops .rest td { height: auto; border-right: 1px solid #e2e2e2; }
.ops .rest td:first-child { border-right-color: #111; }
.node { position: relative; display: flex; align-items: center; height: 24px; white-space: nowrap; }
.node svg { width: 16px; height: 16px; position: relative; }
.node span { padding-left: 3px; line-height: 23px; }
.l0 { padding-left: 4px; }
.l1 { padding-left: 37px; }
.l1.group { padding-left: 23px; }
.l2 { padding-left: 57px; color: #81a997; }
.box { position: relative; z-index: 1; flex: none; width: 11px; height: 11px; border: 1px solid #d0d0d0; margin-right: 4px; background: linear-gradient(#222, #222) center / 7px 1px no-repeat #fff; }
.box.plus { background: linear-gradient(#222, #222) center / 7px 1px no-repeat, linear-gradient(#222, #222) center / 1px 7px no-repeat #fff; }
.line::before { content: ""; position: absolute; top: 0; bottom: 0; left: 28px; border-left: 1px dotted #999; }
.line::after { content: ""; position: absolute; top: 11px; left: 28px; width: 9px; border-top: 1px dotted #999; }
.line.end::before { bottom: 12px; }
.l2.line::before, .l2.line::after { left: 47px; }
.selected .node span { color: #1e1e1e; background: #cce5ea; flex: 1; }
.selected td + td { background: #cce5ea content-box; padding-bottom: 1px; }
.scrollbar { height: 20px; background: #efefef; flex: none; padding: 8px 21px; }
.scrollbar i { display: block; width: 35px; height: 2px; background: #777; }

.viewer { flex: 1; min-width: 0; display: flex; flex-direction: column; }
.tabs { height: 30px; flex: none; border-bottom: 2px solid #005f87; display: flex; }
.tab { width: 108px; justify-content: flex-start; padding-left: 5px; gap: 3px; }
.tab.current { width: 146px; height: 30px; background: #005f87; color: #fff; font-size: 16px; }
.tab svg.mod { width: 12px; height: 13px; margin-left: 2px; }
.tab svg.close { width: 9px; height: 9px; margin-left: 2px; }
.scene { flex: 1; min-height: 0; border-bottom: 1px solid #ddd; overflow: hidden; }
svg.model { width: 100%; height: 100%; }
.axis { font: 13px "Liberation Sans", sans-serif; }
.rightbar { width: 27px; flex: none; border-left: 1px solid #d8d8d8; padding: 9px 0 0 4px; overflow: hidden; }
.rightbar button { height: 32px; width: 24px; }
.rightbar::after { content: ""; display: block; border-top: 1px solid #d8d8d8; margin-top: 5px; }
.dark { color: #3c3c3c; }
.popup-edge { position: absolute; left: 680px; top: 830px; width: 43px; height: 16px; border: 1px solid #c8c8c8; background: #fff; }

.dialog { position: absolute; left: 352px; top: 53px; width: 733px; background: #efefef; border: 1px solid #d0d0d0; border-top: 0; padding-bottom: 12px; }
.dlg-head { height: 27px; margin: 0 -1px; background: #005f87; color: #fff; display: flex; align-items: center; padding: 0 12px 0 9px; }
.dlg-head h2 { font-size: 18px; line-height: 24px; padding-bottom: 2px; margin-left: 8px; margin-right: auto; }
.dlg-head button { width: 12px; margin-left: 14px; font: bold 18px/26px "Noto Sans", sans-serif; }
.dlg-head button svg { width: 12px; height: 12px; }
.find { display: flex; align-items: center; padding: 9px 11px 0; }
.find label { margin: 0 8px 0 2px; padding-bottom: 2px; }
.find input { flex: 1; height: 27px; border: 1px solid #6e6e6e; background: #fff; padding: 0 4px; }
.dlg-body { display: flex; gap: 11px; padding: 7px 13px 0; height: 570px; }
.pages { width: 211px; flex: none; list-style: none; border: 1px solid #d8d8d8; padding: 1px; background: repeating-linear-gradient(#fff 0 23px, #e8e8e8 23px 24px, #fafafa 24px 47px, #e8e8e8 47px 48px) content-box #fff; }
.p { position: relative; display: flex; align-items: center; height: 24px; padding-left: 19px; }
.p span { flex: 1; padding: 1px 0 0 3px; line-height: 22px; height: 24px; border-bottom: 1px solid #e8e8e8; }
.p.selected span { background: #cce5ea; }
.p .box { margin: 0 4px 0 -15px; }
.p.line::before { left: 9px; }
.p.line::after { left: 9px; }
.p.start::before { top: 11px; }
.p.sub { padding-left: 38px; }
.p.sub::after { left: 28px; }
.p.sub::before { width: 20px; border-right: 1px dotted #999; }
.p.sub.last::before { border-right-color: transparent; background: repeating-linear-gradient(#999 0 1px, transparent 1px 2px) right top / 1px 12px no-repeat; background-origin: border-box; background-clip: border-box; }
.settings { flex: 1; border: 1px solid #d8d8d8; padding: 1px 2px 0 0; }
.card { background: #fff; border: 1px solid #d0d0d0; margin-bottom: 2px; padding: 0 9px 8px; }
h3 { display: flex; align-items: center; height: 26px; font-size: 16px; font-weight: bold; color: #005f87; }
.tri { width: 0; height: 0; border: 4px solid transparent; border-top: 5px solid #005f87; border-bottom: 0; margin-right: 8px; }
.tri.right { border: 4px solid transparent; border-left: 5px solid #005f87; border-right: 0; margin: 0 10px 0 2px; }
.field { display: flex; gap: 2px; align-items: flex-start; margin-top: 8px; min-height: 32px; }
.field label { margin-right: auto; line-height: 28px; }
.field.low { margin-top: 2px; }
.lbl { margin-right: auto; line-height: 18px; padding-top: 14px; }
.field.gap { margin-top: 4px; }
.field.num { min-height: 27px; }
.field.num label { line-height: 26px; }
.field.num input { width: 90px; height: 27px; border: 1px solid #6e6e6e; font-size: 17px; text-align: right; padding: 0 5px; }
.sq { width: 32px; height: 32px; border: 1px solid #6e6e6e; background: #fff; color: #3c3c3c; flex: none; }
.sq.small { width: 24px; height: 24px; }
.sq.small svg { width: 14px; height: 16px; }
.sq.off { border-color: #bbb; color: #bbb; }
.w-tool { width: 131px; }
.w-method { width: 152px; }
.closed { padding-bottom: 0; }
.actions { margin: 3px 11px 0; background: #fff; border: 1px solid #d0d0d0; padding: 0 10px 9px 9px; height: 77px; }
.actions h3 { margin-bottom: 8px; }
.row { display: flex; justify-content: flex-end; }
.center { display: flex; gap: 2px; margin: 0 auto; padding-left: 32px; }
.sq.hot { background: #ffe07a; border-color: #fbc02d; box-shadow: -1px 0 0 #fff, -2px 0 0 #ffe07a; }
.collapse { width: 12px; height: 6px; margin: 12px auto 5px; background: #111; clip-path: polygon(50% 0, 100% 100%, 0 100%); }
.dlg-foot { display: flex; justify-content: flex-end; gap: 5px; margin: 0 6px; padding: 8px 10px 0 0; border-top: 1px solid #d0d0d0; }
.dlg-foot button { width: 60px; height: 28px; border: 1px solid #005f87; color: #005f87; }
.dlg-foot .ok { background: #005f87; color: #fff; }
.watermark { position: absolute; right: 4px; bottom: 4px; font: 13px/20px "Liberation Mono", monospace; color: #555; text-shadow: 1px 1px 0 #eee; white-space: pre; }
.watermark span { font: 16px/20px "Noto Sans CJK SC", sans-serif; }
```
